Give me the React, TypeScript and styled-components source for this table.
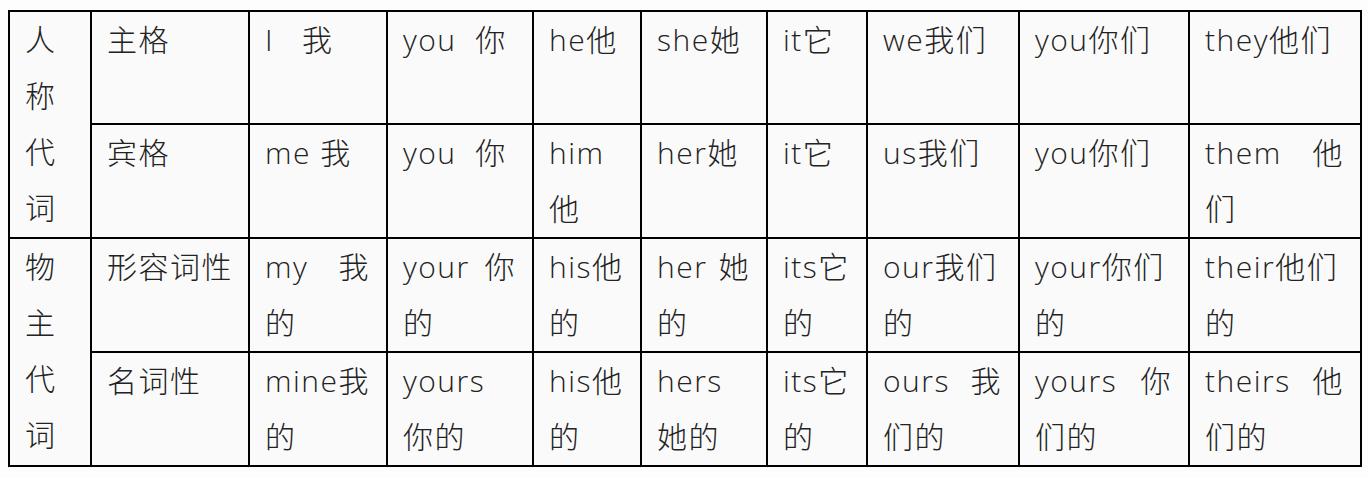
import React from "react"
import styled, { createGlobalStyle } from "styled-components"

const GlobalStyle = createGlobalStyle`
  html, body {
    margin: 0;
    padding: 0;
    background: #fdfdfd;
  }
`

// column widths, measured line to line
const columns = [82, 158, 138, 146, 108, 126, 100, 152, 170, 172]

// "|" splits lines, a leading "~" spreads that line across the cell
const groups = [
  {
    label: "人称代词",
    rows: [
      ["主格", "I\u00a0\u00a0\u00a0我", "you\u00a0\u00a0你", "he他", "she她", "it它", "we我们", "you你们", "they他们"],
      ["宾格", "me\u00a0我", "you\u00a0\u00a0你", "him|他", "her她", "it它", "us我们", "you你们", "~them 他|们"],
    ],
  },
  {
    label: "物主代词",
    rows: [
      ["形容词性", "~my 我|的", "~your 你|的", "his他|的", "~her 她|的", "its它|的", "our我们|的", "your你们|的", "their他们|的"],
      ["名词性", "mine我|的", "yours|你的", "his他|的", "hers|她的", "its它|的", "~ours 我|们的", "~yours 你|们的", "~theirs 他|们的"],
    ],
  },
]

const Page = styled.div`
  padding: 10px 0 0 8px;
`

const Table = styled.table`
  border-collapse: collapse;
  table-layout: fixed;
  width: 1354px;
  background: #fafafa;
  border: 2px solid #000;
  font-family: "Open Sans", "Noto Sans CJK SC", sans-serif;
  font-weight: 300;
  font-size: 30px;
  letter-spacing: 1.5px;
  line-height: 56px;
  color: #222;
`

const Row = styled.tr`
  height: 113px;
`

const Cell = styled.td`
  border: 2px solid #000;
  vertical-align: top;
  padding: 0 16px 0 15px;
  word-break: break-all;
`

const Line = styled.div<{ $spread?: boolean }>`
  display: block;
  white-space: pre;
  text-align: left;
  text-align-last: ${(p) => (p.$spread ? "justify" : "left")};
`

const CellText = ({ value }: { value: string }) => (
  <>
    {value.split("|").map((line, i) => {
      const spread = line.startsWith("~")
      return (
        <Line key={i} $spread={spread}>
          {spread ? line.slice(1) : line}
        </Line>
      )
    })}
  </>
)

const App = () => {
  return (
    <Page>
      <GlobalStyle />
      <Table>
        <colgroup>
          {columns.map((w, i) => (
            <col key={i} style={{ width: w }} />
          ))}
        </colgroup>
        <tbody>
          {groups.map((group) =>
            group.rows.map((cells, r) => (
              <Row key={group.label + r}>
                {r === 0 && <Cell rowSpan={group.rows.length}>{group.label}</Cell>}
                {cells.map((value, c) => (
                  <Cell key={c}>
                    <CellText value={value} />
                  </Cell>
                ))}
              </Row>
            ))
          )}
        </tbody>
      </Table>
    </Page>
  )
}

export default App
